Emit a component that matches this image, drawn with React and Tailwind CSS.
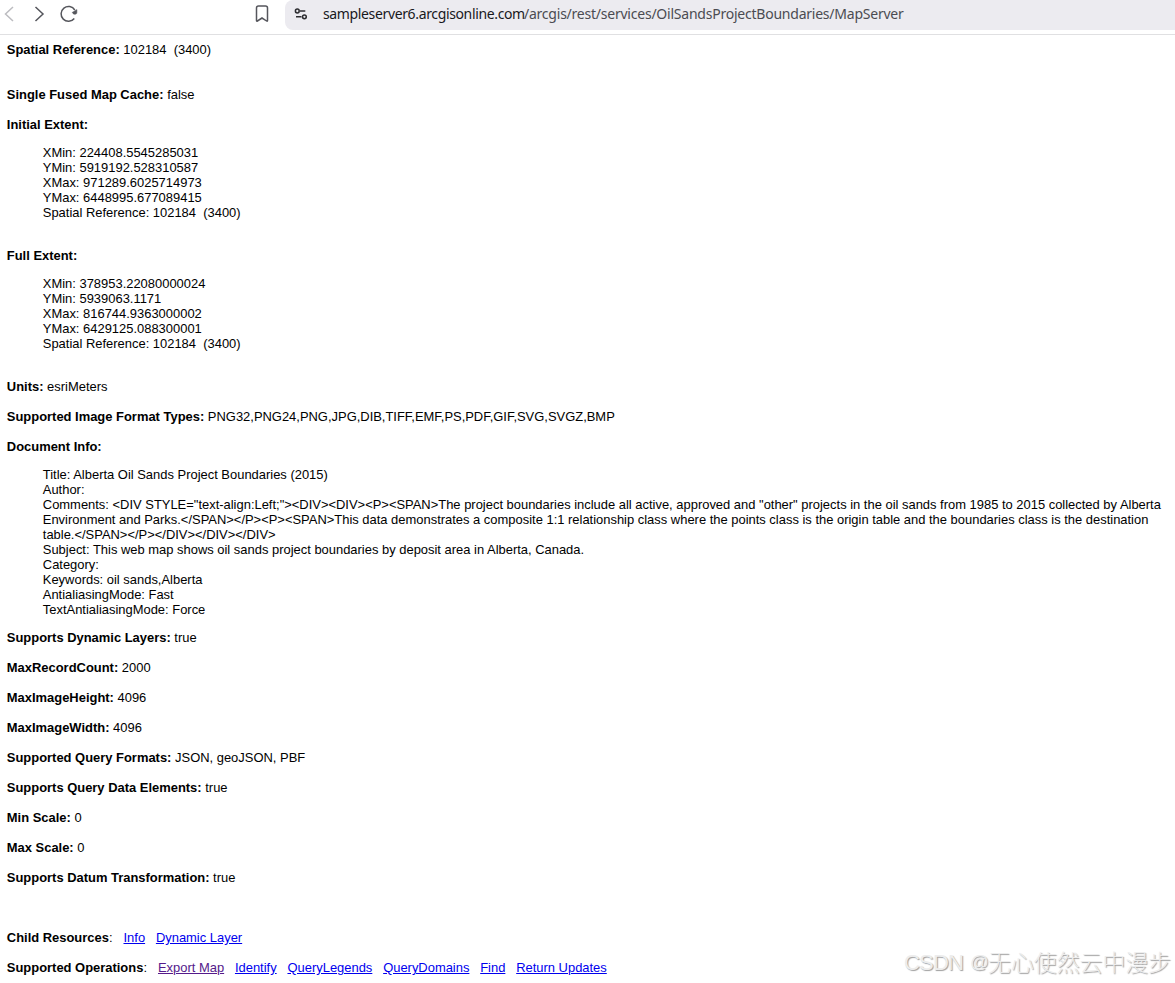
import React from 'react';

const INITIAL_EXTENT = [
  'XMin: 224408.5545285031',
  'YMin: 5919192.528310587',
  'XMax: 971289.6025714973',
  'YMax: 6448995.677089415',
  'Spatial Reference: 102184 \u00a0(3400)',
];

const FULL_EXTENT = [
  'XMin: 378953.22080000024',
  'YMin: 5939063.1171',
  'XMax: 816744.9363000002',
  'YMax: 6429125.088300001',
  'Spatial Reference: 102184 \u00a0(3400)',
];

const DOCUMENT_INFO = [
  'Title: Alberta Oil Sands Project Boundaries (2015)',
  'Author:',
  'Comments: <DIV STYLE="text-align:Left;"><DIV><DIV><P><SPAN>The project boundaries include all active, approved and "other" projects in the oil sands from 1985 to 2015 collected by Alberta Environment and Parks.</SPAN></P><P><SPAN>This data demonstrates a composite 1:1 relationship class where the points class is the origin table and the boundaries class is the destination table.</SPAN></P></DIV></DIV></DIV>',
  'Subject: This web map shows oil sands project boundaries by deposit area in Alberta, Canada.',
  'Category:',
  'Keywords: oil sands,Alberta',
  'AntialiasingMode: Fast',
  'TextAntialiasingMode: Force',
];

const CAPABILITIES = [
  ['Supports Dynamic Layers:', 'true'],
  ['MaxRecordCount:', '2000'],
  ['MaxImageHeight:', '4096'],
  ['MaxImageWidth:', '4096'],
  ['Supported Query Formats:', 'JSON, geoJSON, PBF'],
  ['Supports Query Data Elements:', 'true'],
  ['Min Scale:', '0'],
  ['Max Scale:', '0'],
  ['Supports Datum Transformation:', 'true'],
];

const CHILD_RESOURCES = [{ name: 'Info' }, { name: 'Dynamic Layer' }];

const OPERATIONS = [
  { name: 'Export Map', visited: true },
  { name: 'Identify' },
  { name: 'QueryLegends' },
  { name: 'QueryDomains' },
  { name: 'Find' },
  { name: 'Return Updates' },
];

const BrowserBar = () => (
  <header className="flex h-[35px] items-start border-b border-[#e0e0e2] bg-white">
    <svg className="h-[30px] w-[285px] shrink-0" viewBox="0 0 285 30" fill="none" strokeWidth="1.5">
      <path d="M13 7L5.5 14L13 21" stroke="#bcbcc0" />
      <path d="M35.5 7L43 14L35.5 21" stroke="#55565c" />
      <path d="M74.8 10A7.4 7.4 0 1 0 74.3 18.5" stroke="#55565c" />
      <path d="M72.2 12.4L76.9 9.6V12.6C76.9 13.6 76.1 14.3 75.1 14.3C73.9 14.3 72.8 13.6 72.2 12.4Z" fill="#55565c" stroke="#55565c" strokeWidth="0.5" />
      <path d="M256.5 8Q256.5 6 258.5 6H265.5Q267.5 6 267.5 8V20.5Q267.5 21.6 266.6 21L262 18L257.4 21Q256.5 21.6 256.5 20.5Z" stroke="#55565c" />
    </svg>
    <div className="flex h-[30px] flex-1 items-start rounded-l-lg bg-[#ecebf0]">
      <svg className="mt-[7px] ml-[9px] h-[15px] w-[14px]" viewBox="0 0 14 15" fill="none" stroke="#2c2c30" strokeWidth="1.5">
        <circle cx="3.3" cy="4" r="1.9" />
        <path d="M6 4H11.3M2 9.8H7.5" />
        <circle cx="10.4" cy="9.8" r="1.9" />
      </svg>
      <div className="mt-[4px] ml-[15px] flex font-['Noto_Sans','Open_Sans',sans-serif] text-[14px] leading-[20px] whitespace-nowrap">
        <span className="w-[201px] tracking-[-0.36px] text-[#18181c]">sampleserver6.arcgisonline.com</span>
        <span className="tracking-[-0.23px] text-[#4b4b52]">/arcgis/rest/services/OilSandsProjectBoundaries/MapServer</span>
      </div>
    </div>
  </header>
);

const Field = ({ label, value }) => (
  <p>
    <b>{label}</b> {value}
  </p>
);

const IndentedList = ({ lines }) => (
  <ul className="pl-9">
    {lines.map((line) => (
      <li key={line}>{line}</li>
    ))}
  </ul>
);

const LinkRow = ({ label, links }) => (
  <p className="flex">
    <span className="mr-[11px]">
      <b>{label}</b>:
    </span>
    <span className="flex gap-[10.8px]">
      {links.map((link) => (
        <a
          key={link.name}
          href="#"
          className={`underline ${link.visited ? 'text-[#551a8b]' : 'text-[#0000ee]'}`}
        >
          {link.name}
        </a>
      ))}
    </span>
  </p>
);

const App = () => {
  return (
    <div className="relative h-[983px] w-[1175px] overflow-hidden bg-white">
      <BrowserBar />

      <main className="pt-[7px] pr-[7px] pl-[6.8px] font-['Liberation_Sans',Arial,sans-serif] text-[12.94px] leading-[15px] text-black">
        <Field label="Spatial Reference:" value={'102184 \u00a0(3400)'} />

        <div className="mt-[30px] flex flex-col gap-[15px]">
          <Field label="Single Fused Map Cache:" value="false" />
          <Field label="Initial Extent:" />
        </div>
        <div className="mt-[13px] mb-[28px]">
          <IndentedList lines={INITIAL_EXTENT} />
        </div>

        <Field label="Full Extent:" />
        <div className="mt-[13px] mb-[28px]">
          <IndentedList lines={FULL_EXTENT} />
        </div>

        <div className="flex flex-col gap-[15px]">
          <Field label="Units:" value="esriMeters" />
          <Field
            label="Supported Image Format Types:"
            value="PNG32,PNG24,PNG,JPG,DIB,TIFF,EMF,PS,PDF,GIF,SVG,SVGZ,BMP"
          />
          <Field label="Document Info:" />
        </div>
        <div className="my-[13px]">
          <IndentedList lines={DOCUMENT_INFO} />
        </div>

        <div className="flex flex-col gap-[15px]">
          {CAPABILITIES.map(([label, value]) => (
            <Field key={label} label={label} value={value} />
          ))}
        </div>

        {/* Links */}
        <div className="mt-[45px] flex flex-col gap-[15px]">
          <LinkRow label="Child Resources" links={CHILD_RESOURCES} />
          <LinkRow label="Supported Operations" links={OPERATIONS} />
        </div>
      </main>

      {/* Watermark */}
      <div className="absolute top-[946px] left-[904px] flex font-['Noto_Sans_CJK_SC',sans-serif] text-[22.9px] leading-[32px] font-light whitespace-nowrap text-[#ededed] opacity-95 [text-shadow:1px_1px_1px_#9a9a9a]">
        <span className="mt-px w-[66px] font-['Liberation_Sans',sans-serif] text-[22px] tracking-[-0.8px]">CSDN</span>
        <span className="w-[18px] font-['Liberation_Sans',sans-serif] text-[18.5px]">@</span>
        <span className="-mt-px">无心使然云中漫步</span>
      </div>
    </div>
  );
};

export default App;
